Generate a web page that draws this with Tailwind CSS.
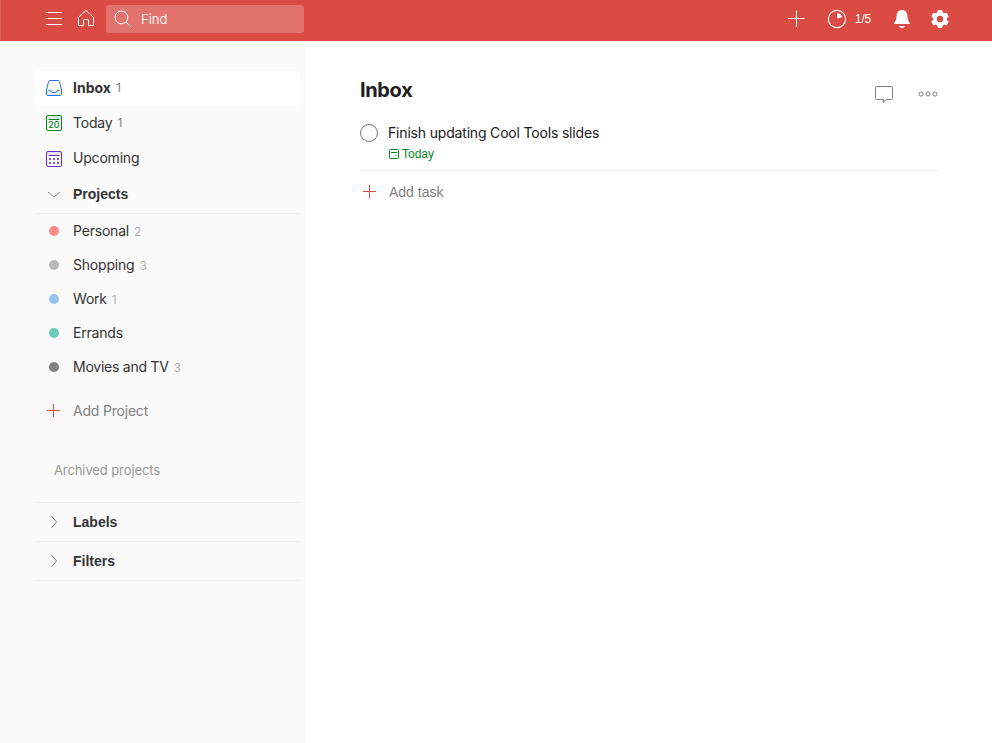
<!DOCTYPE html>
<html lang="en">
<head>
<meta charset="utf-8">
<title>Inbox</title>
<script src="https://cdn.jsdelivr.net/npm/@tailwindcss/browser@4"></script>
</head>
<body class="flex h-screen flex-col overflow-hidden bg-white font-['Inter','Liberation_Sans',sans-serif] text-[14px] text-[#333]">
<header class="flex h-[41px] shrink-0 items-start border-l border-[#de6158] bg-[#da4c43] text-white">
  <svg class="mt-[7px] ml-[41px] size-6" viewBox="0 0 24 24" fill="none" stroke="#fff" stroke-linecap="round"><path d="M4.500 5.500h15M4.500 11.500h15M4.500 17.500h15"/></svg>
  <svg class="mt-[7px] ml-2 size-6" viewBox="0 0 24 24" fill="none" stroke="#fff" stroke-linejoin="round"><path d="M4.500 10.300 12 3.400l7.500 6.900v8.200h-5v-5.300c0-.4-.3-.7-.7-.7h-3.600c-.4 0-.7.3-.7.7v5.300h-5z"/></svg>
  <div class="mt-[5px] ml-2 flex h-7 w-[198px] items-center rounded-[3px] bg-[#e2736c]">
    <svg class="ml-[5px] size-6" viewBox="0 0 24 24" fill="none" stroke="#fff"><circle cx="10.400" cy="10.400" r="6.400"/><path d="m15 15 5 5"/></svg>
    <span class="ml-[6px] text-[13px] leading-5 text-[#fdeeed]">Find</span>
  </div>
  <svg class="mt-[7px] ml-[480px] size-6" viewBox="0 0 24 24" fill="none" stroke="#fff"><path d="M4 11.500h16.500M12.500 3.500V20"/></svg>
  <svg class="mt-[7px] ml-[17px] size-6" viewBox="0 0 24 24" fill="none" stroke="#fff"><circle cx="12" cy="12" r="8.600" stroke-width="1.100"/><path d="M12 11.500v-5.300a5.600 5.600 0 0 1 5.300 4z" fill="#fff" stroke="none"/></svg>
  <span class="mt-[9px] ml-[6px] w-[17px] font-['Liberation_Sans',sans-serif] text-[12px] leading-5 tracking-[-.2px] whitespace-nowrap">1/5</span>
  <svg class="mt-[7px] ml-[18px] size-6" viewBox="0 0 24 24" fill="#fff"><path d="M12 3c3.200 0 5.100 2.200 5.400 5.400.2 3.500.7 5.300 2.300 7.400.4.700.2 1.200-.4 1.200H4.700c-.6 0-.8-.5-.4-1.200 1.600-2.100 2.100-3.900 2.300-7.400C6.900 5.200 8.800 3 12 3zM9 19h6c-.4 1.300-1.500 2-3 2s-2.600-.7-3-2z"/></svg>
  <svg class="mt-[7px] ml-[14px] size-6" viewBox="0 0 24 24" fill="#fff" fill-rule="evenodd"><path d="M10.300 3h3.400c.4 0 .6.300.7.700l.3 1.800c.5.200 1 .5 1.500.9l1.800-.7c.4-.1.700 0 .9.300l1.700 2.900c.2.300.1.700-.2.900l-1.400 1.200v2l1.400 1.200c.3.300.4.600.2.900l-1.700 2.900c-.2.300-.5.400-.9.300l-1.800-.7c-.5.400-1 .7-1.500.9l-.3 1.800c-.1.400-.3.700-.7.700h-3.400c-.4 0-.6-.3-.7-.7l-.3-1.800c-.5-.2-1-.5-1.500-.9l-1.800.7c-.4.1-.7 0-.9-.3l-1.700-2.900c-.2-.3-.1-.6.2-.9L5 13V11L3.600 9.800c-.3-.2-.4-.6-.2-.9l1.700-2.900c.2-.3.500-.4.900-.3l1.800.7c.5-.4 1-.7 1.500-.9l.3-1.800c.1-.4.300-.7.700-.7zM12 8.800a3.200 3.200 0 1 0 0 6.400 3.200 3.200 0 0 0 0-6.400z"/></svg>
</header>

<div class="flex min-h-0 flex-1">
  <aside class="w-[305px] shrink-0 bg-[#fafafa] pt-[30px] pl-[35px]">
    <nav class="w-[265px] tracking-[-.2px]">
      <a class="flex h-[35px] items-center rounded-[3px] bg-white pb-px pl-[7px]">
        <svg class="size-6" viewBox="0 0 24 24" fill="none" stroke="#246fe0"><path d="M4.500 14.500h4l1.500 2h4l1.500-2h4V18c0 .9-.7 1.500-1.500 1.500H6c-.8 0-1.500-.6-1.500-1.500z" fill="#246fe0" fill-opacity=".12" stroke="none"/><path d="M8 4.500h8c.7 0 1.300.5 1.500 1.200l2 8.300v4c0 .9-.7 1.500-1.500 1.500H6c-.8 0-1.500-.6-1.500-1.500v-4l2-8.300c.2-.7.8-1.200 1.500-1.200z"/><path d="M6.500 14.500h2c.3 1.300 1.700 2.100 3.500 2.100s3.200-.8 3.500-2.100h2"/></svg>
        <span class="ml-[7px] pb-[2px] font-bold tracking-normal">Inbox</span><span class="ml-[5px] text-[12px] text-[#777]">1</span>
      </a>
      <a class="flex h-[35px] items-center pb-px pl-[7px]">
        <svg class="size-6" viewBox="0 0 24 24" fill="none" stroke="#058527"><rect x="4.500" y="4.500" width="15" height="15" rx="1.500"/><path d="M5 5h14v3H5z" fill="#058527" fill-opacity=".12" stroke="none"/><path d="M6.500 8.500h11"/><text x="12" y="17.300" text-anchor="middle" class="font-['Inter','Liberation_Sans',sans-serif] text-[9px] font-medium tracking-normal" fill="#058527" stroke="none">20</text></svg>
        <span class="ml-[7px] pb-[2px]">Today</span><span class="ml-[5px] text-[12px] text-[#808080]">1</span>
      </a>
      <a class="flex h-[35px] items-center pl-[7px]">
        <svg class="size-6" viewBox="0 0 24 24" fill="none" stroke="#692fc2"><rect x="4.500" y="4.500" width="15" height="15" rx="1.500"/><path d="M5 5h14v3H5z" fill="#692fc2" fill-opacity=".12" stroke="none"/><path d="M6.500 8.500h11"/><path d="M7 12h2m2 0h2m2 0h2M7 16h2m2 0h2m2 0h2" stroke-width="2" stroke-opacity=".8"/></svg>
        <span class="ml-[7px] pb-[2px]">Upcoming</span>
      </a>
      <div class="flex h-[38px] items-center border-b border-[#f0f0f0] pl-[7px]">
        <svg class="size-6" viewBox="0 0 24 24" fill="none" stroke="#808080"><path d="m6 9 6 5 6-5"/></svg>
        <span class="ml-[7px] font-['Liberation_Sans',sans-serif] font-bold tracking-normal">Projects</span>
      </div>
      <a class="flex h-[34px] items-center pl-[14px]"><i class="size-[10px] rounded-full bg-[#ff8d85]"></i><span class="ml-[14px] pb-[2px]">Personal</span><span class="ml-[5px] pt-px text-[12px] text-[#b0b0b0]">2</span></a>
      <a class="flex h-[34px] items-center pl-[14px]"><i class="size-[10px] rounded-full bg-[#b8b8b8]"></i><span class="ml-[14px] pb-[2px]">Shopping</span><span class="ml-[5px] pt-px text-[12px] text-[#b0b0b0]">3</span></a>
      <a class="flex h-[34px] items-center pl-[14px]"><i class="size-[10px] rounded-full bg-[#96c3eb]"></i><span class="ml-[14px] pb-[2px]">Work</span><span class="ml-[5px] pt-px text-[12px] text-[#b0b0b0]">1</span></a>
      <a class="flex h-[34px] items-center pl-[14px]"><i class="size-[10px] rounded-full bg-[#6accbc]"></i><span class="ml-[14px] pb-[2px]">Errands</span></a>
      <a class="flex h-[34px] items-center pl-[14px]"><i class="size-[10px] rounded-full bg-[#808080]"></i><span class="ml-[14px] pb-[2px] tracking-[-.25px]">Movies and TV</span><span class="ml-[5px] pt-px text-[12px] text-[#b0b0b0]">3</span></a>
      <a class="mt-[9px] flex h-[34px] items-center pl-[12px] text-[#808080]">
        <svg class="size-[13px]" viewBox="0 0 13 13" stroke="#db4c3f"><path d="M0 6.500h13M6.500 0v13"/></svg>
        <span class="ml-[13px]">Add Project</span>
      </a>
      <a class="mt-[26px] block h-[34px] pl-[19px] text-[13px] leading-[34px] tracking-[-.1px] text-[#999]">Archived projects</a>
      <div class="mt-[15px] flex h-[40px] items-center border-y border-[#f0f0f0] pl-[7px]">
        <svg class="size-6" viewBox="0 0 24 24" fill="none" stroke="#808080"><path d="m9.500 6 5 6-5 6"/></svg>
        <span class="ml-[7px] font-['Liberation_Sans',sans-serif] font-bold tracking-normal">Labels</span>
      </div>
      <div class="flex h-[39px] items-center border-b border-[#f0f0f0] pl-[7px]">
        <svg class="size-6" viewBox="0 0 24 24" fill="none" stroke="#808080"><path d="m9.500 6 5 6-5 6"/></svg>
        <span class="ml-[7px] font-['Liberation_Sans',sans-serif] font-bold tracking-normal">Filters</span>
      </div>
    </nav>
  </aside>

  <main class="w-[635px] pt-[34px] pl-[55px] text-[#202020]">
    <div class="flex h-[38px] items-start">
      <h1 class="flex-1 text-[20px] leading-[30px] font-bold tracking-[-.35px]">Inbox</h1>
      <svg class="mt-[7px] size-6" viewBox="0 0 24 24" fill="none" stroke="#808080"><path d="M4.500 4.500h15c.6 0 1 .4 1 1v11c0 .6-.4 1-1 1H14L11.500 20.500v-3h-7c-.6 0-1-.4-1-1v-11c0-.6.400-1 1-1z"/></svg>
      <svg class="mt-[7px] ml-5 size-6" viewBox="0 0 24 24" fill="none" stroke="#808080"><circle cx="5" cy="12" r="2.100"/><circle cx="12" cy="12" r="2.100"/><circle cx="19" cy="12" r="2.100"/></svg>
    </div>
    <div class="flex h-[58px] border-b border-[#eee] pt-[10px]">
      <div class="mt-px size-[18px] shrink-0 rounded-full border border-[#777]"></div>
      <div class="ml-[10px]">
        <div class="leading-5 tracking-[-.18px]">Finish updating Cool Tools slides</div>
        <div class="mt-[2px] flex items-center text-[12px] leading-[18px] text-[#058527]">
          <svg class="mr-[3px] ml-px size-[10px]" viewBox="0 0 10 10" fill="none" stroke="#058527"><rect x=".5" y=".5" width="9" height="9" rx="1"/><path d="M2 3.500h6"/><path d="M6 6.500h1.500" stroke-opacity=".6"/></svg>
          <span class="font-['Liberation_Sans',sans-serif]">Today</span>
        </div>
      </div>
    </div>
    <div class="flex h-[41px] items-center pl-[3px] text-[#808080]">
      <svg class="size-[13px]" viewBox="0 0 13 13" stroke="#db4c3f"><path d="M0 6.500h13M6.500 0v13"/></svg>
      <span class="ml-[13px] pt-[2px] font-['Liberation_Sans',sans-serif]">Add task</span>
    </div>
  </main>
</div>
</body>
</html>
